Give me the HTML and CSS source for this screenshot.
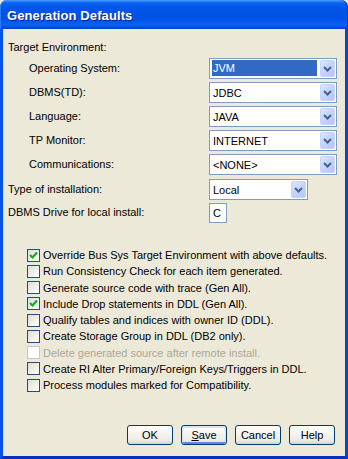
FILE: index.html
```html
<!DOCTYPE html>
<html>
<head>
<meta charset="utf-8">
<link rel="stylesheet" href="styles.css">
</head>
<body>
<div class="window">
  <div class="titlebar"><span class="title">Generation Defaults</span></div>
  <div class="client">
    <div class="section-label">Target Environment:</div>
    <div class="form">
      <label class="lbl indent">Operating System:</label>
      <div class="combo"><span class="value selected">JVM</span><span class="drop"><svg width="9" height="6" viewBox="0 0 9 6"><polyline points="1,1 4.5,4.5 8,1" fill="none" stroke="#4d6185" stroke-width="2"/></svg></span></div>
      <label class="lbl indent">DBMS(TD):</label>
      <div class="combo"><span class="value">JDBC</span><span class="drop"><svg width="9" height="6" viewBox="0 0 9 6"><polyline points="1,1 4.5,4.5 8,1" fill="none" stroke="#4d6185" stroke-width="2"/></svg></span></div>
      <label class="lbl indent">Language:</label>
      <div class="combo"><span class="value">JAVA</span><span class="drop"><svg width="9" height="6" viewBox="0 0 9 6"><polyline points="1,1 4.5,4.5 8,1" fill="none" stroke="#4d6185" stroke-width="2"/></svg></span></div>
      <label class="lbl indent">TP Monitor:</label>
      <div class="combo"><span class="value">INTERNET</span><span class="drop"><svg width="9" height="6" viewBox="0 0 9 6"><polyline points="1,1 4.5,4.5 8,1" fill="none" stroke="#4d6185" stroke-width="2"/></svg></span></div>
      <label class="lbl indent">Communications:</label>
      <div class="combo"><span class="value">&lt;NONE&gt;</span><span class="drop"><svg width="9" height="6" viewBox="0 0 9 6"><polyline points="1,1 4.5,4.5 8,1" fill="none" stroke="#4d6185" stroke-width="2"/></svg></span></div>
      <label class="lbl">Type of installation:</label>
      <div class="combo short"><span class="value">Local</span><span class="drop"><svg width="9" height="6" viewBox="0 0 9 6"><polyline points="1,1 4.5,4.5 8,1" fill="none" stroke="#4d6185" stroke-width="2"/></svg></span></div>
      <label class="lbl">DBMS Drive for local install:</label>
      <div class="textbox">C</div>
    </div>
    <ul class="checks">
      <li><span class="box checked"><svg width="11" height="11" viewBox="0 0 11 11"><polyline points="2,5 4.5,7.5 9,2.5" fill="none" stroke="#21a121" stroke-width="2.2"/></svg></span>Override Bus Sys Target Environment with above defaults.</li>
      <li><span class="box"></span>Run Consistency Check for each item generated.</li>
      <li><span class="box"></span>Generate source code with trace (Gen All).</li>
      <li><span class="box checked"><svg width="11" height="11" viewBox="0 0 11 11"><polyline points="2,5 4.5,7.5 9,2.5" fill="none" stroke="#21a121" stroke-width="2.2"/></svg></span>Include Drop statements in DDL (Gen All).</li>
      <li><span class="box"></span>Qualify tables and indices with owner ID (DDL).</li>
      <li><span class="box"></span>Create Storage Group in DDL (DB2 only).</li>
      <li class="disabled"><span class="box"></span>Delete generated source after remote install.</li>
      <li><span class="box"></span>Create RI Alter Primary/Foreign Keys/Triggers in DDL.</li>
      <li><span class="box"></span>Process modules marked for Compatibility.</li>
    </ul>
    <div class="buttons">
      <button class="btn">OK</button>
      <button class="btn default"><u>S</u>ave</button>
      <button class="btn">Cancel</button>
      <button class="btn">Help</button>
    </div>
  </div>
</div>
</body>
</html>
```
FILE: styles.css
```css
html, body {
  margin: 0;
  padding: 0;
  width: 348px;
  height: 459px;
  overflow: hidden;
  background: #ece9d8;
}
.window {
  width: 348px;
  height: 459px;
  display: flex;
  flex-direction: column;
  font-family: "Liberation Sans", Arial, sans-serif;
  font-size: 11px;
  color: #000;
}
.titlebar {
  height: 29px;
  flex: none;
  border-radius: 7px 7px 0 0;
  background: linear-gradient(to bottom, #4a9cff 0px, #0a62f2 3px, #0056e8 8px, #0052e4 18px, #0960f4 25px, #0450e0 27px, #0040cc 29px);
  display: flex;
  align-items: center;
  padding-left: 7px;
  box-shadow: inset 1px 0 0 #2a7cff, inset -1px 0 0 #0038c0;
}
.title {
  color: #fff;
  font-weight: bold;
  font-size: 13px;
  letter-spacing: 0.1px;
  text-shadow: 1px 1px 0 #0a1e8c;
  margin-top: 1px;
}
.client {
  flex: 1;
  display: flex;
  flex-direction: column;
  border-left: 3px solid #0554e6;
  border-right: 3px solid #0446d2;
  border-bottom: 3px solid #0730c0;
  box-shadow: inset 1px 0 0 #e0ddd0;
  padding: 12px 10px 11px 5px;
}
.section-label {
  line-height: 13px;
  height: 13px;
  margin-bottom: 4px;
}
.form {
  display: grid;
  grid-template-columns: 201px auto;
  grid-auto-rows: 21px;
  row-gap: 3px;
  align-items: center;
}
.form .lbl:nth-of-type(6) { margin-top: 1px; }
.lbl { line-height: 13px; }
.lbl.indent { padding-left: 21px; }
.combo {
  width: 128px;
  height: 21px;
  box-sizing: border-box;
  border: 1px solid #7f9db9;
  background: #fff;
  display: flex;
  padding: 1px;
  align-items: stretch;
}
.combo.short { width: 99px; margin-top: 2px; }
.combo .value {
  flex: 1;
  display: flex;
  align-items: center;
  padding-left: 2px;
  margin-right: 3px;
}
.combo .value.selected {
  background: #316ac5;
  color: #fff;
  margin: 0 3px 1px 1px;
  padding-left: 1px;
}
.drop {
  width: 15px;
  flex: none;
  box-sizing: border-box;
  border: 1px solid #c5d4fb;
  border-radius: 2px;
  background: linear-gradient(135deg, #dce6fe 0%, #c3d4fc 50%, #b0c5f6 100%);
  display: flex;
  align-items: center;
  justify-content: center;
}
.textbox {
  width: 18px;
  height: 20px;
  box-sizing: border-box;
  border: 1px solid #7f9db9;
  background: #fff;
  display: flex;
  align-items: center;
  padding-left: 3px;
}
.checks {
  list-style: none;
  margin: 24px 0 0 19px;
  padding: 0;
}
.checks li {
  height: 16.25px;
  display: flex;
  align-items: center;
  white-space: nowrap;
}
.box {
  width: 13px;
  height: 13px;
  box-sizing: border-box;
  border: 1px solid #1c5180;
  background: linear-gradient(135deg, #dcdcd7 0%, #f2f2ee 60%, #ffffff 100%);
  margin-right: 3px;
  flex: none;
  display: flex;
  align-items: center;
  justify-content: center;
}
.checks li.disabled { color: #aca899; }
.checks li.disabled .box {
  border-color: #cac8bb;
  background: #fff;
}
.buttons {
  margin-top: auto;
  display: flex;
  justify-content: flex-end;
  gap: 8px;
}
.btn {
  width: 46px;
  height: 20px;
  box-sizing: border-box;
  border: 1px solid #003c74;
  border-radius: 3px;
  background: linear-gradient(to bottom, #ffffff 0%, #f5f4f0 40%, #ecebe6 80%, #d6d0c5 100%);
  font-family: "Liberation Sans", Arial, sans-serif;
  font-size: 11px;
  color: #000;
  padding: 0;
  margin: 0;
}
.btn.default {
  box-shadow: inset 0 1px 0 1px #cee7ff, inset 0 -1px 0 1px #6982ee;
}
```
